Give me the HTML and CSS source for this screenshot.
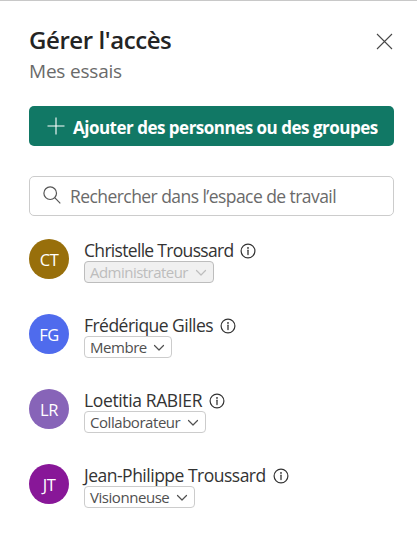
FILE: index.html
```html
<!DOCTYPE html>
<html lang="fr">
<head>
<meta charset="utf-8">
<title>Gérer l'accès</title>
<link rel="stylesheet" href="styles.css">
</head>
<body>
<svg class="defs" aria-hidden="true">
  <symbol id="info" viewBox="0 0 16 16"><circle cx="8" cy="8" r="6.9" fill="none" stroke="currentColor" stroke-width="1.2"/><path d="M8 7.2v4.3" stroke="currentColor" stroke-width="1.3" stroke-linecap="round"/><circle cx="8" cy="4.9" r=".95" fill="currentColor"/></symbol>
  <symbol id="chevron" viewBox="0 0 12 8"><path d="M1.5 1.5 6 6l4.5-4.5" fill="none" stroke="currentColor" stroke-width="1.2" stroke-linecap="round" stroke-linejoin="round"/></symbol>
</svg>
<main class="panel">
  <header class="header">
    <div>
      <h1 class="title">Gérer l'accès</h1>
      <p class="subtitle">Mes essais</p>
    </div>
    <button class="close" aria-label="Fermer"><svg width="17" height="17" viewBox="0 0 17 17"><path d="M1 1l15 15M16 1L1 16" stroke="currentColor" stroke-width="1.1"/></svg></button>
  </header>
  <button class="add">
    <svg width="18" height="18" viewBox="0 0 18 18"><path d="M9 .5v17M.5 9h17" stroke="currentColor" stroke-width="1.1"/></svg>
    <span>Ajouter des personnes ou des groupes</span>
  </button>
  <label class="search">
    <svg width="18" height="18" viewBox="0 0 18 18"><circle cx="7.2" cy="7.2" r="6.3" fill="none" stroke="currentColor" stroke-width="1.2"/><path d="M11.7 11.7l5.6 5.6" stroke="currentColor" stroke-width="1.2"/></svg>
    <span>Rechercher dans l’espace de travail</span>
  </label>
  <ul class="people">
    <li class="person">
      <span class="avatar gold">CT</span>
      <div>
        <div class="name"><span class="christelle">Christelle Troussard</span><svg class="info"><use href="#info"/></svg></div>
        <button class="role disabled w130" disabled><span>Administrateur</span><svg class="chevron"><use href="#chevron"/></svg></button>
      </div>
    </li>
    <li class="person">
      <span class="avatar blue">FG</span>
      <div>
        <div class="name"><span class="frederique">Frédérique Gilles</span><svg class="info"><use href="#info"/></svg></div>
        <button class="role w88"><span>Membre</span><svg class="chevron"><use href="#chevron"/></svg></button>
      </div>
    </li>
    <li class="person">
      <span class="avatar violet">LR</span>
      <div>
        <div class="name"><span class="loetitia">Loetitia RABIER</span><svg class="info"><use href="#info"/></svg></div>
        <button class="role w122"><span>Collaborateur</span><svg class="chevron"><use href="#chevron"/></svg></button>
      </div>
    </li>
    <li class="person">
      <span class="avatar purple">JT</span>
      <div>
        <div class="name"><span class="jean">Jean-Philippe Troussard</span><svg class="info"><use href="#info"/></svg></div>
        <button class="role w111"><span>Visionneuse</span><svg class="chevron"><use href="#chevron"/></svg></button>
      </div>
    </li>
  </ul>
</main>
</body>
</html>
```
FILE: styles.css
```css
* { box-sizing: border-box; }
body { margin: 0; background: #fff; color: #333; font-family: "Open Sans", "Noto Sans", sans-serif; }
button { font: inherit; margin: 0; padding: 0; border: 0; background: none; }
svg { flex: none; display: block; }
.defs { position: absolute; width: 0; height: 0; }
.panel { height: 558px; padding: 23px 23px 0 29px; border-top: 1px solid #c8c8c8; white-space: nowrap; }
.header { display: flex; justify-content: space-between; height: 82px; }
.title { margin: 0; font-size: 24px; line-height: 32px; font-weight: 600; color: #242424; letter-spacing: -0.42px; }
.subtitle { margin: 1px 0 0; font-size: 19px; line-height: 28px; color: #6a6a6a; letter-spacing: -0.2px; }
.close { width: 17px; height: 17px; margin: 9px 1px 0 0; color: #484848; }
.add { display: flex; align-items: center; width: 365px; height: 40px; padding-left: 18px; border-radius: 5px; background: #117865; color: #fff; font-size: 17px; font-weight: 700; letter-spacing: -0.5px; }
.add svg { margin-bottom: 1px; }
.add span { margin: 2px 0 0 8px; }
.search { display: flex; align-items: center; height: 40px; margin-top: 30px; padding-left: 13px; border: 1px solid #ccc; border-radius: 5px; color: #6a6a6a; font-size: 17.5px; letter-spacing: -0.56px; }
.search svg { margin-bottom: 3px; color: #555; }
.search span { margin-left: 9px; }
.people { list-style: none; margin: 23px 0 0; padding: 0; }
.person { display: flex; gap: 15px; height: 75px; }
.avatar { width: 40px; height: 40px; border-radius: 50%; color: #fff; font-size: 16.5px; line-height: 42px; text-align: center; letter-spacing: -0.5px; }
.gold { background: #986f0b; }
.blue { background: #4f6bed; }
.violet { background: #8764b8; }
.purple { background: #881798; }
.name { display: flex; align-items: center; height: 22px; font-size: 17.5px; }
.christelle { letter-spacing: -0.69px; }
.frederique { letter-spacing: -0.53px; }
.loetitia { letter-spacing: -0.37px; }
.jean { letter-spacing: -0.5px; }
.info { width: 16px; height: 16px; margin: 2px 0 0 7px; }
.role { display: flex; align-items: center; height: 22px; padding-left: 5px; border: 1px solid #ccc; border-radius: 4px; background: #fff; color: #505050; font-size: 15px; letter-spacing: -0.45px; }
.role.disabled { background: #f0f0f0; border-color: #bdbdbd; color: #bdbdbd; letter-spacing: -0.53px; }
.chevron { width: 12px; height: 8px; margin: 2px 6px 0 auto; }
.w130 { width: 130px; }
.w88 { width: 88px; }
.w122 { width: 122px; }
.w111 { width: 111px; }
```
